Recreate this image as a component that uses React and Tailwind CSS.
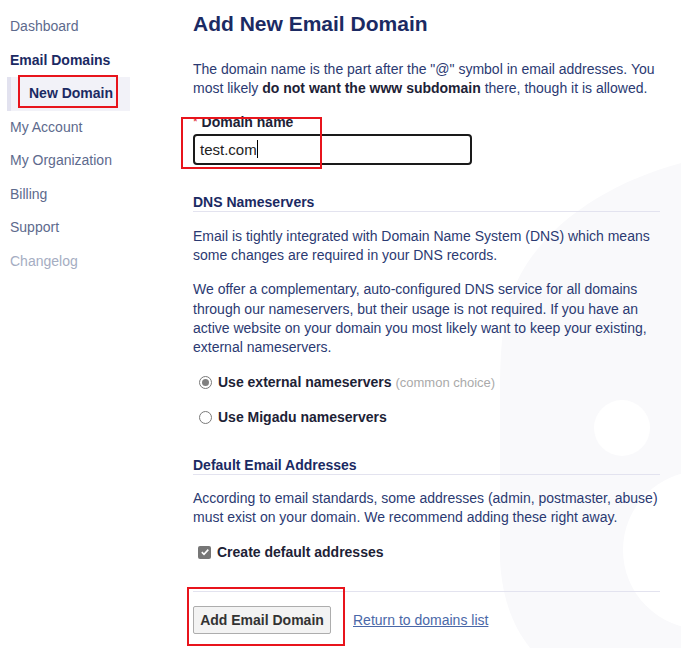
import { useState } from 'react'

const navItems = [
  { label: 'Dashboard', kind: 'muted' },
  { label: 'Email Domains', kind: 'section' },
  { label: 'New Domain', kind: 'active' },
  { label: 'My Account', kind: 'muted' },
  { label: 'My Organization', kind: 'muted' },
  { label: 'Billing', kind: 'muted' },
  { label: 'Support', kind: 'muted' },
  { label: 'Changelog', kind: 'faded' },
]

function Sidebar() {
  return (
    <nav className="w-[193px] shrink-0 pt-[10px]">
      {navItems.map((item) => {
        if (item.kind === 'active') {
          return (
            <div key={item.label} className="ml-[7px] w-[123px] h-[33.5px] flex items-center bg-[#f2f2f8] border-l-[4px] border-[#e2e2ef]">
              <span className="pl-[18px] font-bold text-[#1b2a63]">{item.label}</span>
            </div>
          )
        }
        const color =
          item.kind === 'section'
            ? 'font-bold text-[#1b2a63]'
            : item.kind === 'faded'
            ? 'text-[#a5adc2]'
            : 'text-[#5d6a8d]'
        return (
          <div key={item.label} className={`h-[33.5px] flex items-center pl-[10px] ${color}`}>
            {item.label}
          </div>
        )
      })}
    </nav>
  )
}

function SectionHeader({ children, className = '' }) {
  return (
    <h3 className={`font-bold text-[#1b2a63] leading-[18px] border-b border-[#e3e3ef] ${className}`}>
      {children}
    </h3>
  )
}

function Radio({ checked, children }) {
  return (
    <label className="flex items-center h-[20px] pl-[6px]">
      <span className="w-[13px] h-[13px] rounded-full border border-[#7a7a7a] bg-white flex items-center justify-center">
        {checked && <span className="w-[7px] h-[7px] rounded-full bg-[#808080]" />}
      </span>
      <span className="ml-[6px] font-bold text-[#1d2236]">{children}</span>
    </label>
  )
}

export default function App() {
  const [external] = useState(true)

  return (
    <div className="relative h-[648px] overflow-hidden bg-white text-[14px] font-['Liberation_Sans',Arial,sans-serif]">
      {/* faint watermark logo behind the form */}
      <svg className="absolute inset-0 w-[681px] h-[648px]" viewBox="0 0 681 648">
        <path
          d="M681 163 C600 185 525 235 507 310 C500 340 500 370 500 400 L500 560 C502 600 514 628 530 648 L681 648 Z"
          fill="#f9f9fb"
        />
        <circle cx="622" cy="428" r="28" fill="#ffffff" />
        <circle cx="702" cy="550" r="79" fill="#ffffff" />
      </svg>

      <div className="relative flex">
        <Sidebar />

        <main className="w-[467px] pt-[10px] text-[#2b3a72] leading-[19.3px]">
          <h1 className="text-[21px] leading-[28px] font-bold text-[#1b2a63]">Add New Email Domain</h1>

          <p className="mt-[22px]">
            The domain name is the part after the "@" symbol in email addresses. You most likely{' '}
            <b className="text-[#1d2236]">do not want the www subdomain</b> there, though it is allowed.
          </p>

          <label className="block mt-[14px] font-bold text-[#1d2236]">
            <span className="text-[#e0242c] font-normal text-[12px] align-top">*</span> Domain name
          </label>
          <div className="mt-[2px] w-[279px] h-[31px] border-2 border-[#1a1a1a] rounded-[4px] flex items-center pl-[5px] text-[15px] text-[#222]">
            test.com
            <span className="w-px h-[18px] bg-black" />
          </div>

          <SectionHeader className="mt-[28px]">DNS Nameservers</SectionHeader>
          <p className="mt-[15px]">
            Email is tightly integrated with Domain Name System (DNS) which means some changes are required in your DNS records.
          </p>
          <p className="mt-[15px]">
            We offer a complementary, auto-configured DNS service for all domains through our nameservers, but their usage is not required. If you have an active website on your domain you most likely want to keep your existing, external nameservers.
          </p>

          <div className="mt-[15px] flex flex-col gap-[15px]">
            <Radio checked={external}>
              Use external nameservers{' '}
              <span className="font-normal text-[13px] text-[#aaaaaa]">(common choice)</span>
            </Radio>
            <Radio checked={!external}>Use Migadu nameservers</Radio>
          </div>

          <SectionHeader className="mt-[28px]">Default Email Addresses</SectionHeader>
          <p className="mt-[14px]">
            According to email standards, some addresses (admin, postmaster, abuse) must exist on your domain. We recommend adding these right away.
          </p>

          <label className="mt-[15px] flex items-center h-[20px] pl-[5px]">
            <span className="w-[13px] h-[13px] rounded-[2px] bg-[#767676] flex items-center justify-center">
              <svg width="10" height="10" viewBox="0 0 10 10">
                <path d="M1.8 5.2 L4 7.3 L8.3 2.6" stroke="white" strokeWidth="1.6" fill="none" />
              </svg>
            </span>
            <span className="ml-[6px] font-bold text-[#1d2236]">Create default addresses</span>
          </label>

          <div className="mt-[29px] border-t border-[#e3e3ef] pt-[14px] flex items-center">
            <button className="w-[138px] h-[28px] bg-[#f3f3f3] border border-[#adadad] rounded-[2px] font-bold text-[#333]">
              Add Email Domain
            </button>
            <a href="#" className="ml-[22px] text-[#4a68a8] underline">Return to domains list</a>
          </div>
        </main>
      </div>

      {/* red annotation boxes */}
      <div className="absolute left-[18px] top-[75px] w-[100px] h-[33px] border-2 border-[#e8141c]" />
      <div className="absolute left-[181px] top-[117px] w-[141px] h-[52px] border-2 border-[#e8141c]" />
      <div className="absolute left-[187px] top-[587px] w-[158px] h-[59px] border-2 border-[#e8141c]" />
    </div>
  )
}
